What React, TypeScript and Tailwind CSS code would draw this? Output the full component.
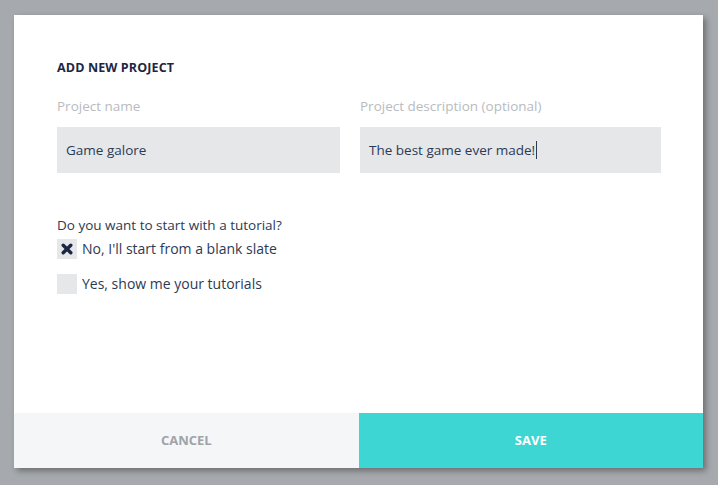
import { useState } from 'react';

function Checkbox({ checked, label }: { checked: boolean; label: string }) {
  return (
    <label className="flex items-center gap-[5px] text-[14px] text-[#2c3a55]">
      <span className="flex h-[20px] w-[20px] items-center justify-center bg-[#e6e7e9]">
        {checked && (
          <svg viewBox="0 0 12 12" className="h-[12px] w-[12px]">
            <path d="M2.2 2.2L9.8 9.8M9.8 2.2L2.2 9.8" stroke="#1c2744" strokeWidth="3.4" strokeLinecap="round" />
          </svg>
        )}
      </span>
      {label}
    </label>
  );
}

export default function App() {
  const [name] = useState('Game galore');
  const [desc] = useState('The best game ever made!');

  return (
    <div
      className="flex h-[485px] w-[718px] bg-[#a6a9ad] pl-[14px] pt-[15px]"
      style={{ fontFamily: '"Open Sans", sans-serif' }}
    >
      <div className="flex h-[453px] w-[689px] flex-col bg-white shadow-[3px_3px_6px_rgba(0,0,0,0.35)]">
        <div className="flex flex-1 flex-col pl-[43px] pr-[42px] pt-[44px]">
          <h2 className="text-[12.5px] font-bold tracking-[0.01em] text-[#1c2744]">ADD NEW PROJECT</h2>
          <div className="mt-[18px] grid grid-cols-[283px_1fr] gap-[20px]">
            <div className="flex flex-col">
              <span className="text-[13.5px] text-[#b8bbbf]">Project name</span>
              <div className="mt-[11px] flex h-[46px] items-center bg-[#e6e7e9] px-[9px] text-[13.5px] text-[#2c3a55]">
                {name}
              </div>
            </div>
            <div className="flex flex-col">
              <span className="text-[13.5px] text-[#b8bbbf]">Project description (optional)</span>
              <div className="mt-[11px] flex h-[46px] items-center bg-[#e6e7e9] px-[9px] text-[13.5px] text-[#2c3a55]">
                {desc}
                <span className="ml-[1px] h-[18px] w-[1px] bg-[#2c3a55]" />
              </div>
            </div>
          </div>
          <p className="mt-[42px] text-[13.5px] text-[#2c3a55]">Do you want to start with a tutorial?</p>
          <div className="mt-[3px] flex flex-col gap-[14px]">
            <Checkbox checked label="No, I'll start from a blank slate" />
            <Checkbox checked={false} label="Yes, show me your tutorials" />
          </div>
        </div>
        <div className="flex h-[55px]">
          <button className="flex-1 bg-[#f5f6f8] text-[13px] font-bold text-[#9fa3aa]">CANCEL</button>
          <button className="flex-1 bg-[#3dd6d3] text-[13px] font-bold text-white">SAVE</button>
        </div>
      </div>
    </div>
  );
}
